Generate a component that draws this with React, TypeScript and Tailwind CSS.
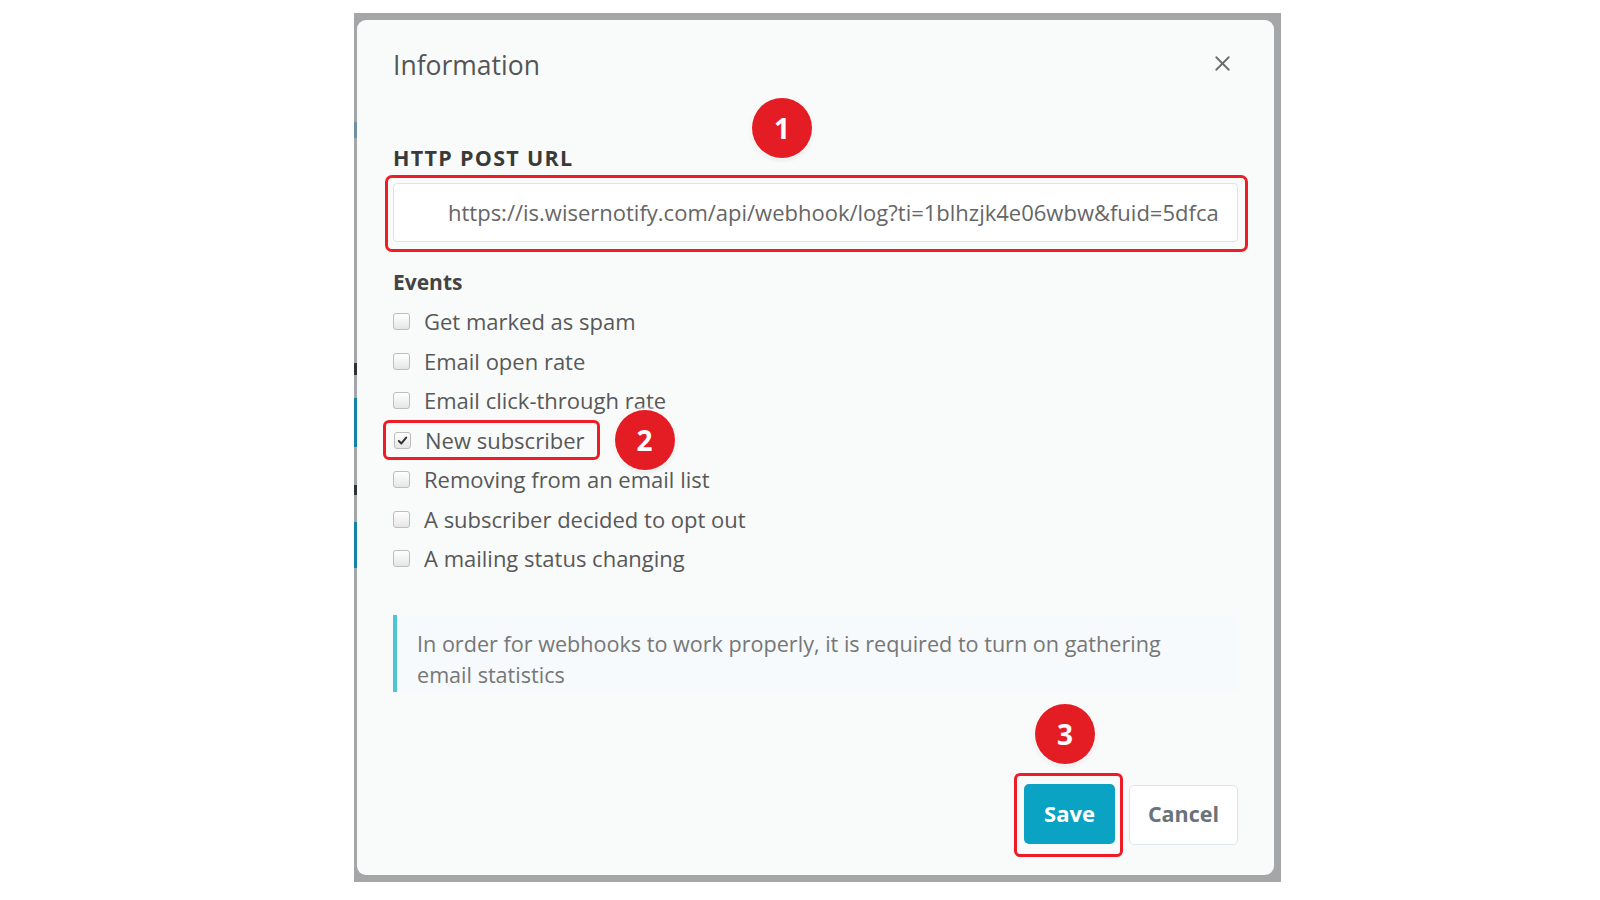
// App.tsx — webhook "Information" dialog with numbered annotation callouts
import { X } from "lucide-react";

const events = [
  { label: "Get marked as spam", checked: false },
  { label: "Email open rate", checked: false },
  { label: "Email click-through rate", checked: false },
  { label: "New subscriber", checked: true },
  { label: "Removing from an email list", checked: false },
  { label: "A subscriber decided to opt out", checked: false },
  { label: "A mailing status changing", checked: false },
];

function Badge({ n }: { n: number }) {
  return (
    <div className="w-[60px] h-[60px] rounded-full bg-[#e41d25] text-white text-[28px] font-bold flex items-center justify-center shadow-[0_0_3px_2px_rgba(255,255,255,0.9),0_1px_4px_rgba(0,0,0,0.25)]">
      {n}
    </div>
  );
}

function Checkbox({ checked }: { checked: boolean }) {
  return (
    <span className="w-[17px] h-[17px] shrink-0 rounded-[3px] border border-[#bdbdbd] bg-gradient-to-b from-[#ffffff] to-[#e6e6e6] flex items-center justify-center">
      {checked && (
        <svg width="11" height="11" viewBox="0 0 12 12">
          <path d="M2 6.5 L4.8 9.2 L10 2.8" fill="none" stroke="#333" strokeWidth="2.2" strokeLinecap="round" strokeLinejoin="round" />
        </svg>
      )}
    </span>
  );
}

export default function App() {
  return (
    <div className="w-[1600px] h-[900px] bg-white overflow-hidden font-['Open_Sans','Liberation_Sans',sans-serif]">
      {/* grey backdrop frame around the dialog */}
      <div className="relative ml-[354px] mt-[13px] w-[927px] h-[869px] bg-[#a3a7a7] pt-[7px] pl-[3px] pr-[7px] pb-[7px]">
        {/* bits of the page behind, peeking on the left edge */}
        <div className="absolute left-0 top-[109px] w-[3px] h-[16px] bg-[#6f8fa3]" />
        <div className="absolute left-0 top-[350px] w-[3px] h-[12px] bg-[#2c3438]" />
        <div className="absolute left-0 top-[385px] w-[3px] h-[49px] bg-[#1583a6]" />
        <div className="absolute left-0 top-[472px] w-[3px] h-[10px] bg-[#2c3438]" />
        <div className="absolute left-0 top-[509px] w-[3px] h-[46px] bg-[#1583a6]" />

        <div className="relative h-full rounded-[9px] bg-[#f9fbfb] px-[36px] pt-[29px]">
          {/* Header */}
          <div className="h-[32px] flex items-center justify-between">
            <h2 className="text-[26.5px] leading-[32px] text-[#555]">Information</h2>
            <X className="mr-[3px] -mt-[3px] text-[#6a6a6a]" size={25} strokeWidth={1.7} />
          </div>

          {/* Annotation 1 */}
          <div className="absolute left-[395px] top-[78px]">
            <Badge n={1} />
          </div>

          {/* URL field */}
          <p className="mt-[65px] text-[21.5px] leading-[24px] font-bold tracking-[1.3px] text-[#3a3a3a]">HTTP POST URL</p>
          <div className="mt-[5px] -ml-[8px] -mr-[10px] border-[3px] border-[#ee1c24] rounded-[7px] pl-[5px] pr-[7px] pt-[5px] pb-[7px]">
            <div className="h-[59px] bg-white border border-[#dde4e6] rounded-[4px] flex items-center pl-[54px] pr-[10px] overflow-hidden">
              <span className="text-[22px] text-[#666] whitespace-nowrap">
                https://is.wisernotify.com/api/webhook/log?ti=1blhzjk4e06wbw&amp;fuid=5dfca
              </span>
            </div>
          </div>

          {/* Events */}
          <p className="mt-[18px] text-[21px] leading-[24px] font-bold text-[#444]">Events</p>
          <div className="mt-[8px] flex flex-col">
            {events.map((e) =>
              e.checked ? (
                <div key={e.label} className="h-[39.5px] flex items-center gap-[15px]">
                  <div className="-ml-[10px] h-[40px] flex items-center gap-[14px] border-[3px] border-[#ee1c24] rounded-[6px] pl-[8px] pr-[12px]">
                    <Checkbox checked />
                    <span className="text-[22px] text-[#585858]">{e.label}</span>
                  </div>
                  <Badge n={2} />
                </div>
              ) : (
                <div key={e.label} className="h-[39.5px] flex items-center gap-[14px]">
                  <Checkbox checked={false} />
                  <span className="text-[22px] text-[#585858]">{e.label}</span>
                </div>
              )
            )}
          </div>

          {/* Note */}
          <div className="mt-[36px] border-l-[4px] border-[#4cc6d2] bg-[#f6fafc] pl-[20px] pt-[13px] pb-[2px] text-[21.6px] leading-[31px] text-[#777]">
            In order for webhooks to work properly, it is required to turn on gathering
            <br />
            email statistics
          </div>

          {/* Actions */}
          <div className="mt-[81px] flex items-center justify-end gap-[6px]">
            <div className="relative border-[3px] border-[#ee1c24] rounded-[6px] pl-[7px] pr-[5px] pt-[8px] pb-[10px]">
              <div className="absolute left-[18px] -top-[72px]">
                <Badge n={3} />
              </div>
              <button className="w-[91px] h-[60px] rounded-[5px] bg-[#0aa3c3] text-white text-[22px] font-bold">
                Save
              </button>
            </div>
            <button className="w-[109px] h-[60px] rounded-[5px] bg-white border border-[#dfe5e8] text-[#6a737a] text-[21.5px] font-bold">
              Cancel
            </button>
          </div>
        </div>
      </div>
    </div>
  );
}
